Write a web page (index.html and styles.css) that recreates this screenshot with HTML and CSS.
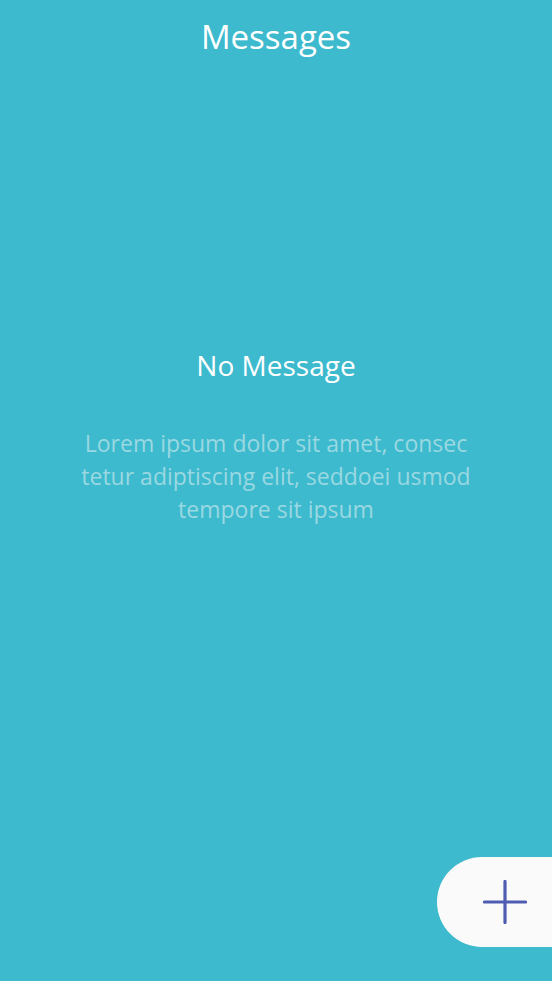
FILE: index.html
```html
<!DOCTYPE html>
<html>
<head>
<meta charset="utf-8">
<link rel="stylesheet" href="styles.css">
</head>
<body>
<div class="screen">
  <header class="title">Messages</header>
  <main class="empty">
    <h2 class="empty-title">No Message</h2>
    <p class="empty-text">Lorem ipsum dolor sit amet, consec<br>tetur adiptiscing elit, seddoei usmod<br>tempore sit ipsum</p>
  </main>
  <button class="fab" aria-label="New message">
    <svg width="44" height="44" viewBox="0 0 44 44"><path d="M22 1.5V42.5M1.5 22H42.5" stroke="#4e5db1" stroke-width="3.2" stroke-linecap="round" fill="none"/></svg>
  </button>
</div>
</body>
</html>
```
FILE: styles.css
```css
html, body {
  margin: 0;
  padding: 0;
  background: #3dbacd;
}
.screen {
  position: relative;
  width: 552px;
  height: 981px;
  background: #3dbacd;
  font-family: "Open Sans", "Noto Sans", sans-serif;
  color: #ffffff;
  overflow: hidden;
}
.title {
  text-align: center;
  font-size: 33px;
  font-weight: 400;
  line-height: 40px;
  padding-top: 17px;
}
.empty {
  display: flex;
  flex-direction: column;
  align-items: center;
  text-align: center;
  padding-top: 290px;
}
.empty-title {
  margin: 0;
  font-size: 28px;
  font-weight: 400;
  line-height: 36px;
}
.empty-text {
  margin: 44px 0 0;
  font-size: 23px;
  line-height: 33px;
  color: #9ad8e2;
}
.fab {
  position: absolute;
  left: 437px;
  top: 857px;
  width: 140px;
  height: 90px;
  border: none;
  border-radius: 45px 0 0 45px;
  background: #fafafa;
  padding: 0 0 0 46px;
  display: flex;
  align-items: center;
}
.fab svg { display: block; }
```
